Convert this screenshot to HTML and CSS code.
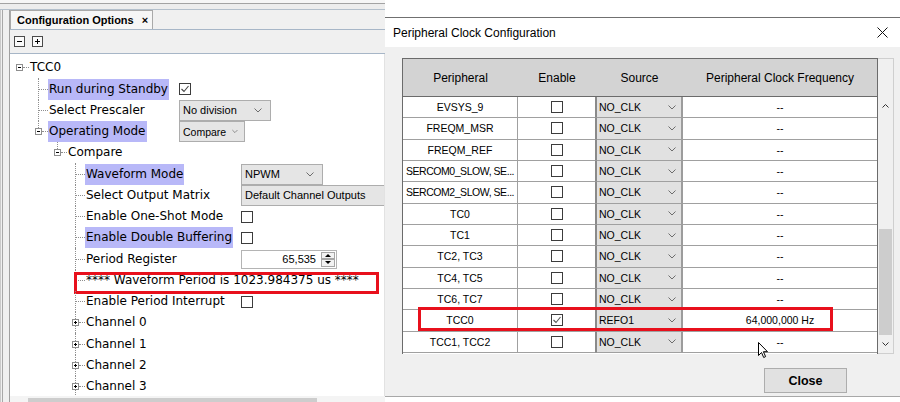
FILE: index.html
```html
<!DOCTYPE html>
<html lang="en">
<head>
    <meta charset="UTF-8">
    <title>Configuration Options</title>
    <link rel="stylesheet" href="styles.css">
</head>
<body>
    <!-- left: IDE configuration tree -->
    <div class="ide">
        <div class="ide-top"></div>
        <div class="ide-body">
            <div class="ide-edge"></div>
            <div class="ide-main">
                <div class="tabbar">
                    <div class="tab">Configuration Options<span class="tab-x">&#215;</span></div>
                </div>
                <div class="toolbar">
                    <span class="tbtn minus"></span>
                    <span class="tbtn plus"></span>
                </div>
                <div class="tree">
                    <div class="row l0"><div class="key"><b class="box minus"></b><i class="twig"></i><span class="name">TCC0</span></div></div>
                    <div class="row l1">
                        <div class="key"><i class="twig"></i><span class="name hl">Run during Standby</span></div>
                        <span class="check"><svg width="10" height="10" viewBox="0 0 10 10"><path d="M1.5 5 L4 7.5 L8.5 2" fill="none" stroke="#444" stroke-width="1.1"/></svg></span>
                    </div>
                    <div class="row l1">
                        <div class="key"><i class="twig"></i><span class="name">Select Prescaler</span></div>
                        <div class="combo w92">No division<svg class="chev" width="8" height="5" viewBox="0 0 8 5"><path d="M0.5 0.5 L4 4 L7.5 0.5" fill="none" stroke="#6d6d6d"/></svg></div>
                    </div>
                    <div class="row l1 last">
                        <div class="key"><b class="box minus"></b><i class="twig"></i><span class="name hl">Operating Mode</span></div>
                        <div class="combo w65">Compare<svg class="chev" width="8" height="5" viewBox="0 0 8 5"><path d="M0.5 0.5 L4 4 L7.5 0.5" fill="none" stroke="#6d6d6d"/></svg></div>
                    </div>
                    <div class="row l2 last"><div class="key"><b class="box minus"></b><i class="twig"></i><span class="name">Compare</span></div></div>
                    <div class="row l3">
                        <div class="key"><i class="twig"></i><span class="name hl">Waveform Mode</span></div>
                        <div class="combo w82">NPWM<svg class="chev" width="8" height="5" viewBox="0 0 8 5"><path d="M0.5 0.5 L4 4 L7.5 0.5" fill="none" stroke="#6d6d6d"/></svg></div>
                    </div>
                    <div class="row l3">
                        <div class="key"><i class="twig"></i><span class="name">Select Output Matrix</span></div>
                        <div class="combo w160">Default Channel Outputs</div>
                    </div>
                    <div class="row l3">
                        <div class="key"><i class="twig"></i><span class="name">Enable One-Shot Mode</span></div>
                        <span class="check"></span>
                    </div>
                    <div class="row l3">
                        <div class="key"><i class="twig"></i><span class="name hl">Enable Double Buffering</span></div>
                        <span class="check"></span>
                    </div>
                    <div class="row l3">
                        <div class="key"><i class="twig"></i><span class="name">Period Register</span></div>
                        <div class="spin">
                            <span class="spin-val">65,535</span>
                            <span class="spin-btns"><i class="up"></i><i class="dn"></i></span>
                        </div>
                    </div>
                    <div class="row l3">
                        <div class="key wide"><i class="twig"></i><span class="name">**** Waveform Period is 1023.984375 us ****</span></div>
                        <span class="mark"></span>
                    </div>
                    <div class="row l3">
                        <div class="key"><i class="twig"></i><span class="name">Enable Period Interrupt</span></div>
                        <span class="check"></span>
                    </div>
                    <div class="row l3"><div class="key"><b class="box plus"></b><i class="twig"></i><span class="name">Channel 0</span></div></div>
                    <div class="row l3"><div class="key"><b class="box plus"></b><i class="twig"></i><span class="name">Channel 1</span></div></div>
                    <div class="row l3"><div class="key"><b class="box plus"></b><i class="twig"></i><span class="name">Channel 2</span></div></div>
                    <div class="row l3"><div class="key"><b class="box plus"></b><i class="twig"></i><span class="name">Channel 3</span></div></div>
                </div>
                <div class="hscroll"><div class="hthumb"></div></div>
            </div>
        </div>
    </div>

    <!-- right: clock dialog -->
    <div class="dialog">
        <div class="behind"></div>
        <div class="titlebar">
            <span>Peripheral Clock Configuration</span>
            <svg width="11" height="11" viewBox="0 0 11 11"><path d="M0.5 0.5 L10.5 10.5 M10.5 0.5 L0.5 10.5" stroke="#111" stroke-width="1"/></svg>
        </div>
        <div class="dlg-body">
            <div class="list">
                <div class="grid">
                    <div class="th">Peripheral</div>
                    <div class="th">Enable</div>
                    <div class="th">Source</div>
                    <div class="th">Peripheral Clock Frequency</div>

                    <div class="td">EVSYS_9</div><div class="td en"><span class="check"></span></div><div class="td src">NO_CLK<svg class="chev" width="8" height="5" viewBox="0 0 8 5"><path d="M0.5 0.5 L4 4 L7.5 0.5" fill="none" stroke="#6d6d6d"/></svg></div><div class="td freq">--</div>
                    <div class="td">FREQM_MSR</div><div class="td en"><span class="check"></span></div><div class="td src">NO_CLK<svg class="chev" width="8" height="5" viewBox="0 0 8 5"><path d="M0.5 0.5 L4 4 L7.5 0.5" fill="none" stroke="#6d6d6d"/></svg></div><div class="td freq">--</div>
                    <div class="td">FREQM_REF</div><div class="td en"><span class="check"></span></div><div class="td src">NO_CLK<svg class="chev" width="8" height="5" viewBox="0 0 8 5"><path d="M0.5 0.5 L4 4 L7.5 0.5" fill="none" stroke="#6d6d6d"/></svg></div><div class="td freq">--</div>
                    <div class="td tight">SERCOM0_SLOW, SE...</div><div class="td en"><span class="check"></span></div><div class="td src">NO_CLK<svg class="chev" width="8" height="5" viewBox="0 0 8 5"><path d="M0.5 0.5 L4 4 L7.5 0.5" fill="none" stroke="#6d6d6d"/></svg></div><div class="td freq">--</div>
                    <div class="td tight">SERCOM2_SLOW, SE...</div><div class="td en"><span class="check"></span></div><div class="td src">NO_CLK<svg class="chev" width="8" height="5" viewBox="0 0 8 5"><path d="M0.5 0.5 L4 4 L7.5 0.5" fill="none" stroke="#6d6d6d"/></svg></div><div class="td freq">--</div>
                    <div class="td">TC0</div><div class="td en"><span class="check"></span></div><div class="td src">NO_CLK<svg class="chev" width="8" height="5" viewBox="0 0 8 5"><path d="M0.5 0.5 L4 4 L7.5 0.5" fill="none" stroke="#6d6d6d"/></svg></div><div class="td freq">--</div>
                    <div class="td">TC1</div><div class="td en"><span class="check"></span></div><div class="td src">NO_CLK<svg class="chev" width="8" height="5" viewBox="0 0 8 5"><path d="M0.5 0.5 L4 4 L7.5 0.5" fill="none" stroke="#6d6d6d"/></svg></div><div class="td freq">--</div>
                    <div class="td">TC2, TC3</div><div class="td en"><span class="check"></span></div><div class="td src">NO_CLK<svg class="chev" width="8" height="5" viewBox="0 0 8 5"><path d="M0.5 0.5 L4 4 L7.5 0.5" fill="none" stroke="#6d6d6d"/></svg></div><div class="td freq">--</div>
                    <div class="td">TC4, TC5</div><div class="td en"><span class="check"></span></div><div class="td src">NO_CLK<svg class="chev" width="8" height="5" viewBox="0 0 8 5"><path d="M0.5 0.5 L4 4 L7.5 0.5" fill="none" stroke="#6d6d6d"/></svg></div><div class="td freq">--</div>
                    <div class="td">TC6, TC7</div><div class="td en"><span class="check"></span></div><div class="td src">NO_CLK<svg class="chev" width="8" height="5" viewBox="0 0 8 5"><path d="M0.5 0.5 L4 4 L7.5 0.5" fill="none" stroke="#6d6d6d"/></svg></div><div class="td freq">--</div>
                    <div class="td">TCC0</div><div class="td en"><span class="check"><svg width="10" height="10" viewBox="0 0 10 10"><path d="M1.5 5 L4 7.5 L8.5 2" fill="none" stroke="#555" stroke-width="1.1"/></svg></span></div><div class="td src">REFO1<svg class="chev" width="8" height="5" viewBox="0 0 8 5"><path d="M0.5 0.5 L4 4 L7.5 0.5" fill="none" stroke="#6d6d6d"/></svg></div><div class="td freq">64,000,000 Hz</div>
                    <div class="td">TCC1, TCC2</div><div class="td en"><span class="check"></span></div><div class="td src">NO_CLK<svg class="chev" width="8" height="5" viewBox="0 0 8 5"><path d="M0.5 0.5 L4 4 L7.5 0.5" fill="none" stroke="#6d6d6d"/></svg></div><div class="td freq">--</div>

                    <span class="mark-row"></span>
                    <svg class="cursor" width="11" height="17" viewBox="0 0 11 17"><path d="M0.5 0.5 L0.5 13.5 L3.5 10.5 L5.7 15.5 L7.6 14.6 L5.4 9.7 L9.5 9.7 Z" fill="#fff" stroke="#000" stroke-width="1"/></svg>
                </div>
                <div class="vscroll">
                    <div class="vs-corner"></div>
                    <div class="vs-btn"><svg width="7" height="4" viewBox="0 0 7 4"><path d="M0.5 3.5 L3.5 0.5 L6.5 3.5" fill="none" stroke="#333"/></svg></div>
                    <div class="vs-gap"></div>
                    <div class="vs-thumb"></div>
                    <div class="vs-btn"><svg width="7" height="4" viewBox="0 0 7 4"><path d="M0.5 0.5 L3.5 3.5 L6.5 0.5" fill="none" stroke="#333"/></svg></div>
                </div>
            </div>
            <div class="actions">
                <div class="btn">Close</div>
            </div>
        </div>
        <div class="dlg-foot"></div>
    </div>
</body>
</html>
```

FILE: styles.css
```css
* {
    box-sizing: border-box;
}

body {
    margin: 0;
    width: 900px;
    height: 402px;
    overflow: hidden;
    display: flex;
    background: #fff;
    color: #000;
    font-family: "Liberation Sans", Arial, sans-serif;
}

/* ---------- IDE panel ---------- */
.ide {
    width: 385px;
    flex: none;
    display: flex;
    flex-direction: column;
    background: #f0f0f0;
}

.ide-top {
    height: 10px;
    background: linear-gradient(#f6f6f6 0 3px, #a3a3a3 3px 4px, #ededed 4px 9px, #b4c0cc 9px 10px);
}

.ide-body {
    flex: 1;
    display: flex;
    min-height: 0;
}

.ide-edge {
    width: 10px;
    flex: none;
    background: linear-gradient(90deg, #cacaca 0 1px, #f0f0f0 1px 2px, #a8a8a8 2px 3px, #f0f0f0 3px 9px, #a0a0a0 9px 10px);
}

.ide-main {
    flex: 1;
    min-width: 0;
    display: flex;
    flex-direction: column;
}

.tabbar {
    height: 20px;
    border-bottom: 1px solid #a7b6c7;
    display: flex;
}

.tab {
    width: 143px;
    height: 19px;
    border: 1px solid #a9a9a9;
    border-bottom: none;
    background: #f6f6f6;
    display: flex;
    align-items: center;
    padding-left: 6px;
    font-size: 11px;
    font-weight: bold;
}

.tab-x {
    margin-left: 8px;
    font-size: 11px;
}

.toolbar {
    height: 24px;
    border-bottom: 1px solid #a7b6c7;
    display: flex;
    gap: 7px;
    padding: 6px 0 0 4px;
}

.tbtn {
    width: 11px;
    height: 11px;
    border: 1px solid #4a4a4a;
    background-color: #fafafa;
}

.tbtn.minus {
    background: linear-gradient(#000, #000) center / 5px 1px no-repeat, #fafafa;
}

.tbtn.plus {
    background: linear-gradient(#000, #000) center / 5px 1px no-repeat, linear-gradient(#000, #000) center / 1px 5px no-repeat, #fafafa;
}

/* tree */
.tree {
    flex: 1;
    background: #fff;
    overflow: hidden;
    padding-top: 3.2px;
    border-right: 1px solid #e2e2e2;
}

.row {
    height: 21.25px;
    display: flex;
    align-items: center;
    position: relative;
    font-family: "DejaVu Sans", Verdana, sans-serif;
    font-size: 12px;
}

.l0 { --x: 9px; }
.l1 { --x: 28px; }
.l2 { --x: 47px; }
.l3 { --x: 65px; }

.row::before {
    content: "";
    position: absolute;
    left: var(--x);
    top: 0;
    bottom: 0;
    border-left: 1px dotted #8e8e8e;
}

.row.last::before {
    bottom: 50%;
}

.l0::before {
    display: none;
}

.key {
    flex: none;
    height: 100%;
    display: flex;
    align-items: center;
    padding-left: var(--x);
}

.l1 .key { width: 169px; }
.l3 .key { width: 231px; }
.l3 .key.wide { width: auto; }

.twig {
    flex: none;
    width: 10px;
    border-top: 1px dotted #8e8e8e;
}

.box {
    flex: none;
    width: 7px;
    height: 7px;
    margin-left: -3px;
    border: 1px solid #8e8e8e;
    position: relative;
}

.box + .twig {
    width: 6px;
}

.box.minus {
    background: linear-gradient(#000, #000) center / 3px 1px no-repeat, #fff;
}

.box.plus {
    background: linear-gradient(#000, #000) center / 3px 1px no-repeat, linear-gradient(#000, #000) center / 1px 3px no-repeat, #fff;
}

.name {
    padding: 0 1px;
    line-height: 21px;
    white-space: nowrap;
}

.hl {
    background: #b8b8f8;
}

.combo {
    flex: none;
    height: 21px;
    border: 1px solid #adadad;
    background: #e5e5e5;
    display: flex;
    align-items: center;
    justify-content: space-between;
    gap: 6px;
    padding: 0 8px 0 3px;
    font-family: "Liberation Sans", Arial, sans-serif;
    font-size: 11px;
    white-space: nowrap;
}

.w92 { width: 92px; }
.w65 { width: 66px; font-size: 10.5px; padding-right: 6px; }
.w82 { width: 82px; }
.w160 { width: 160px; }

.check {
    flex: none;
    width: 12px;
    height: 12px;
    border: 1px solid #3c3c3c;
    background: #fff;
    display: flex;
    align-items: center;
    justify-content: center;
}

.spin {
    flex: none;
    width: 96px;
    height: 19px;
    border: 1px solid #b4b4b4;
    background: #fff;
    display: flex;
    font-family: "Liberation Sans", Arial, sans-serif;
    font-size: 11px;
}

.spin-val {
    flex: 1;
    text-align: right;
    padding-right: 4px;
    line-height: 17px;
}

.spin-btns {
    width: 16px;
    display: flex;
    flex-direction: column;
    padding: 1px;
}

.spin-btns i {
    flex: 1;
    display: flex;
    align-items: center;
    justify-content: center;
    background: #f2f2f2;
    border: 1px solid #a6a6a6;
}

.spin-btns i::after {
    content: "";
    border-left: 3px solid transparent;
    border-right: 3px solid transparent;
}

.spin-btns .up::after { border-bottom: 3px solid #000; }
.spin-btns .dn::after { border-top: 3px solid #000; }

.mark {
    position: absolute;
    left: 64px;
    top: 2px;
    width: 305px;
    height: 22px;
    border: 3px solid #e8101c;
}

.hscroll {
    height: 6px;
    padding: 2px 0 0 18px;
    background: #f4f4f4;
}

.hthumb {
    width: 289px;
    height: 4px;
    background: #cdcdcd;
}

/* ---------- dialog ---------- */
.dialog {
    flex: 1;
    display: flex;
    flex-direction: column;
}

.behind {
    height: 18px;
    background: #fff;
    border-bottom: 1px solid #707070;
}

.titlebar {
    height: 29px;
    background: #fff;
    display: flex;
    align-items: center;
    justify-content: space-between;
    padding: 0 12px 0 8px;
    font-size: 12px;
}

.dlg-body {
    flex: 1;
    background: #f0f0f0;
    border-bottom: 1px solid #a8a8a8;
    padding: 11px 0 0 17px;
    display: flex;
    flex-direction: column;
}

.dlg-foot {
    height: 5px;
}

.list {
    display: flex;
}

.grid {
    position: relative;
    width: 476px;
    display: grid;
    grid-template-columns: 115px 78px 87px 194px;
    grid-template-rows: 38px repeat(12, 21.33px);
    border: 1px solid #6b6b6b;
    border-bottom: none;
    background: #fff;
    font-size: 10.5px;
}

.th {
    background: #d3d3d3;
    border-bottom: 1px solid #6b6b6b;
    display: flex;
    align-items: center;
    justify-content: center;
    font-size: 12px;
}

.td {
    border-right: 1px solid #a0a0a0;
    border-bottom: 1px solid #a0a0a0;
    display: flex;
    align-items: center;
    justify-content: center;
    white-space: nowrap;
}

.td.tight {
    letter-spacing: -0.45px;
}

.td.en {
    border-right-color: #8a8a8a;
}

.td.src {
    justify-content: space-between;
    background: #e1e1e1;
    border-left: 1px solid #8a8a8a;
    border-right: 2px solid #9c9c9c;
    padding: 0 5px 0 2px;
}

.td.freq {
    border-right: none;
}

.mark-row {
    position: absolute;
    left: 15px;
    top: 248px;
    width: 415px;
    height: 24px;
    border: 3px solid #e8101c;
}

.cursor {
    position: absolute;
    left: 355px;
    top: 283px;
}

.vscroll {
    width: 16px;
    display: flex;
    flex-direction: column;
    border: 1px solid #cfcfcf;
    border-left: none;
    background: #f0f0f0;
}

.vs-corner {
    height: 38px;
}

.vs-btn {
    height: 18px;
    display: flex;
    align-items: center;
    justify-content: center;
}

.vs-gap {
    height: 114px;
}

.vs-thumb {
    height: 106px;
    margin: 0 1px;
    background: #cdcdcd;
}

.actions {
    display: flex;
    justify-content: flex-end;
    padding-right: 53px;
    margin-top: 14px;
}

.btn {
    width: 83px;
    height: 25px;
    border: 1px solid #adadad;
    background: #e1e1e1;
    display: flex;
    align-items: center;
    justify-content: center;
    font-size: 12.5px;
    font-weight: bold;
}
```
